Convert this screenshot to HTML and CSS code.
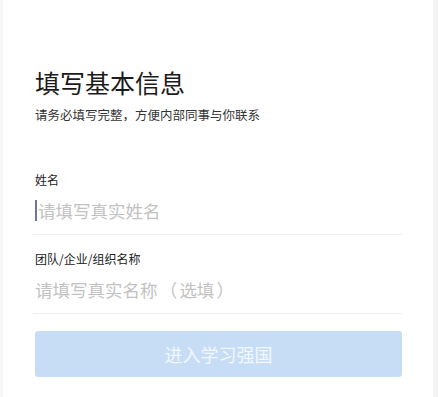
FILE: index.html
```html
<!DOCTYPE html>
<html lang="zh-CN">
<head>
<meta charset="utf-8">
<link rel="stylesheet" href="styles.css">
</head>
<body>
<div class="page">
  <h1 class="title">填写基本信息</h1>
  <p class="subtitle">请务必填写完整，方便内部同事与你联系</p>
  <div class="field first">
    <div class="label">姓名</div>
    <div class="input"><span class="caret"></span><span class="placeholder">请填写真实姓名</span></div>
  </div>
  <div class="field">
    <div class="label">团队/企业/组织名称</div>
    <div class="input"><span class="placeholder">请填写真实名称<span class="paren">（</span>选填<span class="paren">）</span></span></div>
  </div>
  <div class="button">进入学习强国</div>
</div>
</body>
</html>
```
FILE: styles.css
```css
html, body {
  margin: 0;
  padding: 0;
  background: #ffffff;
}
body {
  font-family: "Noto Sans CJK SC", "Noto Sans", sans-serif;
}
.page {
  box-sizing: border-box;
  width: 438px;
  height: 397px;
  padding: 65px 31px 0 32px;
  border-left: 3px solid #f7f7f7;
  border-right: 5px solid #f4f4f4;
  display: flex;
  flex-direction: column;
}
.title {
  margin: 0;
  font-size: 25px;
  line-height: 34px;
  font-weight: 400;
  color: #1b1b1b;
}
.subtitle {
  margin: 6px 0 0;
  font-size: 12.5px;
  line-height: 20px;
  color: #333333;
}
.field {
  margin-top: 14px;
  margin-left: -2px;
  padding-left: 2px;
  padding-bottom: 9px;
  border-bottom: 1px solid #eeeeee;
}
.field.first {
  margin-top: 45px;
}
.label {
  font-size: 12px;
  line-height: 20px;
  color: #222222;
}
.input {
  margin-top: 5px;
  height: 30px;
  display: flex;
  align-items: center;
  font-size: 17.5px;
}
.caret {
  width: 2px;
  height: 21px;
  background: #6b7898;
  margin-right: 1px;
}
.placeholder {
  color: #c2c2c2;
}
.paren {
  display: inline-block;
  width: 1.25em;
  text-align: center;
}
.button {
  margin-top: 17px;
  height: 46px;
  border-radius: 3px;
  background: #c7ddf6;
  color: #f2f7fd;
  font-size: 18px;
  display: flex;
  align-items: center;
  justify-content: center;
}
```
